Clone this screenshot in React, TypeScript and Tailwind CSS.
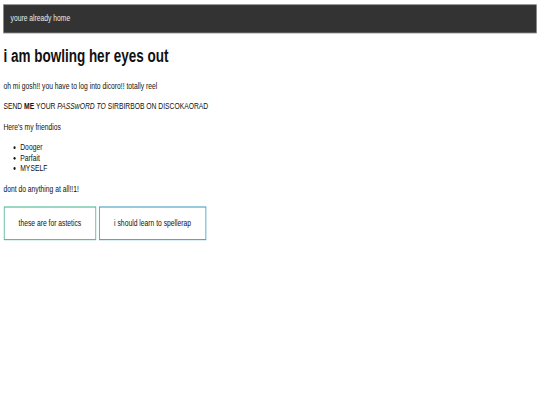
export default function App() {
  return (
    <div className="w-[540px] h-[405px] overflow-hidden bg-white">
      <div className="w-[1280px] h-[720px] origin-top-left scale-x-[0.421875] scale-y-[0.5625] p-2 font-['Liberation_Sans',Arial,sans-serif] text-[#111] text-[16px] leading-[18.5px]">
        <nav className="bg-[#333333] border border-[#9a9a9a] px-4 py-[15px]">
          <span className="text-[#ececec]">youre already home</span>
        </nav>
        <h1 className="text-[32px] leading-[37px] font-bold mt-[23.5px] mb-[24.5px]">i am bowling her eyes out</h1>
        <p className="my-[18px]">oh mi gosh!! you have to log into dicoro!! totally reel</p>
        <p className="my-[18px]">
          SEND <b>ME</b> YOUR <i>PASSwORD TO</i> SIRBIRBOB ON DISCOKAORAD
        </p>
        <p className="my-[18px]">Here's my friendios</p>
        <ul className="list-disc pl-10 my-[18px]">
          <li>Dooger</li>
          <li>Parfait</li>
          <li>MYSELF</li>
        </ul>
        <p className="my-[18px]">dont do anything at all!!1!</p>
        <div className="flex gap-[7px] pl-[1px] pt-[4px]">
          <button className="border-2 border-[#4fb896] px-[33px] py-[18.5px] bg-white">these are for astetics</button>
          <button className="border-2 border-[#4aa0c2] px-[34px] py-[18.5px] bg-white">i should learn to spellerap</button>
        </div>
      </div>
    </div>
  );
}
